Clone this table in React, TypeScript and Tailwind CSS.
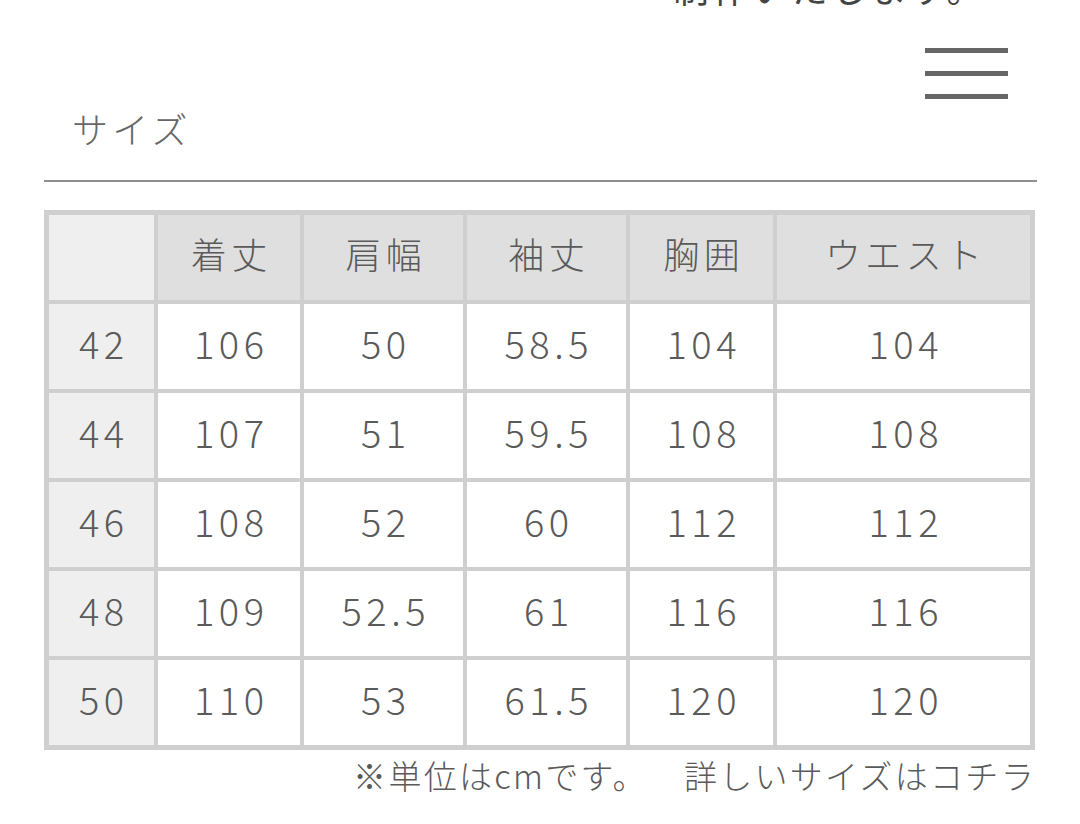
const headers = ['着丈', '肩幅', '袖丈', '胸囲', 'ウエスト']

const rows = [
  ['42', '106', '50', '58.5', '104', '104'],
  ['44', '107', '51', '59.5', '108', '108'],
  ['46', '108', '52', '60', '112', '112'],
  ['48', '109', '52.5', '61', '116', '116'],
  ['50', '110', '53', '61.5', '120', '120'],
]

export default function App() {
  return (
    <div
      className="w-[1080px] h-[824px] bg-white overflow-hidden px-[44px] text-[#5a5a5a]"
      style={{ fontFamily: '"Noto Sans CJK JP", "Noto Sans", sans-serif' }}
    >
      {/* cut-off line from the previous block */}
      <div className="h-[9px] overflow-hidden flex justify-end pr-[50px]">
        <p className="text-[36px] leading-[36px] -mt-[31px] tracking-[0.1em] text-[#444]">制作いたします。</p>
      </div>

      {/* menu button */}
      <div className="flex justify-end pt-[39px] pr-[28px]">
        <button className="w-[83px] flex flex-col gap-[18px]">
          <span className="block h-[5px] bg-[#666]" />
          <span className="block h-[5px] bg-[#666]" />
          <span className="block h-[5px] bg-[#666]" />
        </button>
      </div>

      <h2 className="mt-[11px] pl-[28px] text-[36px] leading-[36px] tracking-[0.12em] text-[#666] font-light">サイズ</h2>
      <div className="mt-[34px] h-[2px] bg-[#8f8f8f] -mr-px" />

      {/* size table */}
      <div className="mt-[28px] w-[991px] grid grid-cols-[105px_142px_159px_159px_143px_253px] auto-rows-[85px] gap-[4px] p-[5px] bg-[#cfcfcf] font-light">
        <div className="bg-[#efefef]" />
        {headers.map(h => (
          <div key={h} className="bg-[#dfdfdf] flex items-center justify-center pb-[9px] text-[36px] tracking-[0.12em] pl-[0.12em]">
            {h}
          </div>
        ))}
        {rows.map(row =>
          row.map((v, i) => (
            <div
              key={row[0] + '-' + i}
              className={
                (i === 0 ? 'bg-[#efefef]' : 'bg-white') +
                ' flex items-center justify-center pb-[9px] text-[38px] tracking-[0.12em] pl-[0.12em]'
              }
            >
              {v}
            </div>
          ))
        )}
      </div>

      <p className="mt-[7px] text-right text-[33px] leading-[36px] tracking-[0.07em] font-light">
        <span>※単位はcmです。</span>
        <span className="ml-[36px]">詳しいサイズはコチラ</span>
      </p>
    </div>
  )
}
